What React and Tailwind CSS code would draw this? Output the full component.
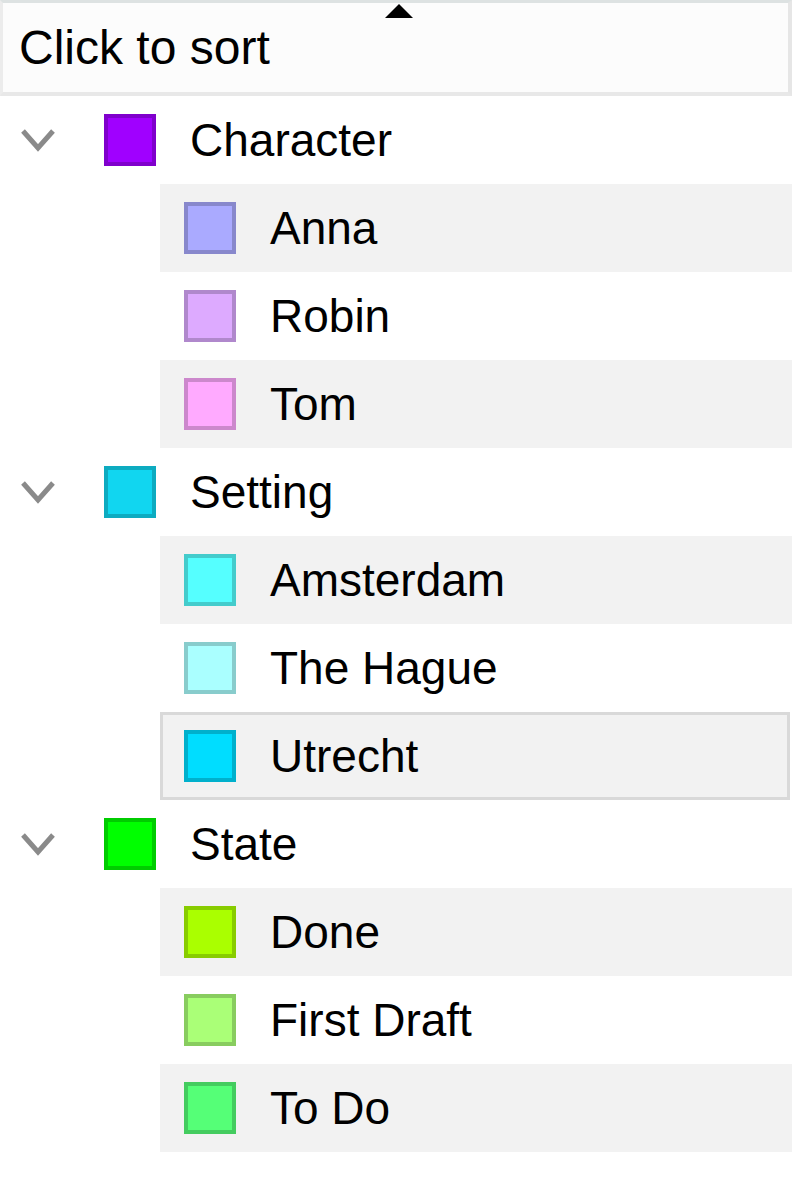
const groups = [
  {
    name: "Character",
    color: "bg-[#a000ff]",
    items: [
      { name: "Anna", color: "bg-[#aaaaff]" },
      { name: "Robin", color: "bg-[#ddaaff]" },
      { name: "Tom", color: "bg-[#ffaaff]" },
    ],
  },
  {
    name: "Setting",
    color: "bg-[#11d6f0]",
    items: [
      { name: "Amsterdam", color: "bg-[#55ffff]" },
      { name: "The Hague", color: "bg-[#aaffff]" },
      { name: "Utrecht", color: "bg-[#00ddff]", selected: true },
    ],
  },
  {
    name: "State",
    color: "bg-[#00ff00]",
    items: [
      { name: "Done", color: "bg-[#aaff00]" },
      { name: "First Draft", color: "bg-[#aaff77]" },
      { name: "To Do", color: "bg-[#55ff77]" },
    ],
  },
];

const Swatch = ({ color }) => (
  <div className={`w-[52px] h-[52px] shrink-0 border-4 border-black/20 ${color}`} />
);

const Chevron = () => (
  <svg width="36" height="26" viewBox="0 0 36 26" className="shrink-0">
    <polyline points="3,4 18,21 33,4" fill="none" stroke="#8a8a8a" strokeWidth="5" />
  </svg>
);

const App = () => {
  return (
    <div
      className="w-[792px] h-[1180px] bg-white text-black text-[46px] leading-none overflow-hidden"
      style={{ fontFamily: '"Liberation Sans", Arial, sans-serif' }}
    >
      <div className="relative h-[96px] flex items-center pl-[16px] text-[48px] bg-[#fcfcfc] border-t-[3px] border-l-[3px] border-b-[4px] border-r-[4px] border-t-[#dde2e2] border-l-[#ececec] border-b-[#e8e8e8] border-r-[#e6e6e6]">
        <span>Click to sort</span>
        <svg width="28" height="14" viewBox="0 0 28 14" className="absolute left-[382px] top-[1px]">
          <polygon points="14,0 28,14 0,14" fill="#000" />
        </svg>
      </div>

      {groups.map((g) => (
        <div key={g.name}>
          <div className="h-[88px] flex items-center pl-[20px]">
            <Chevron />
            <div className="ml-[48px]">
              <Swatch color={g.color} />
            </div>
            <span className="ml-[34px]">{g.name}</span>
          </div>
          {g.items.map((it, i) => (
            <div
              key={it.name}
              className={
                it.selected
                  ? "ml-[160px] mr-[2px] h-[88px] flex items-center pl-[21px] bg-[#f2f2f2] border-[3px] border-[#d9d9d9]"
                  : i % 2 === 0
                  ? "ml-[160px] h-[88px] flex items-center pl-[24px] bg-[#f2f2f2]"
                  : "ml-[160px] h-[88px] flex items-center pl-[24px] bg-white"
              }
            >
              <Swatch color={it.color} />
              <span className="ml-[34px]">{it.name}</span>
            </div>
          ))}
        </div>
      ))}
    </div>
  );
};

export default App;
